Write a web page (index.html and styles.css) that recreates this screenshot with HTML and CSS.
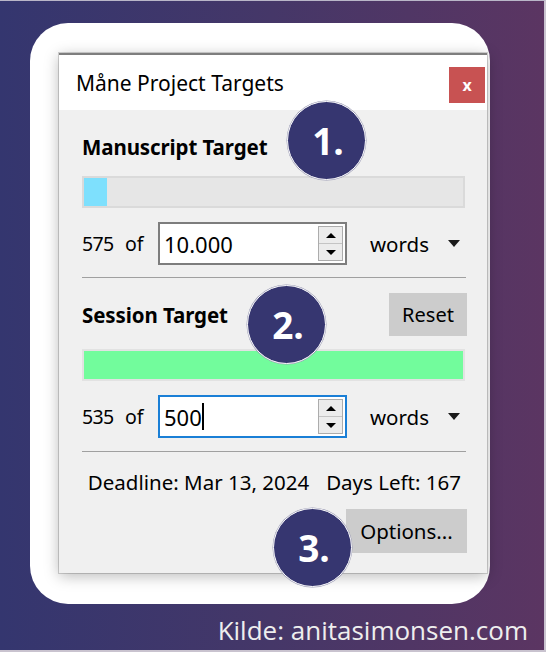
FILE: index.html
```html
<!DOCTYPE html>
<html lang="en">
<head>
<meta charset="utf-8">
<title>Måne Project Targets</title>
<link rel="stylesheet" href="styles.css">
</head>
<body>
<div class="frame">
  <div class="card">
    <div class="dialog">
      <div class="titlebar">
        <span class="title">Måne Project Targets</span>
        <span class="close">x</span>
      </div>
      <div class="body">
        <div class="heading">Manuscript Target</div>
        <div class="bar"><div class="fill blue" style="width:6%"></div></div>
        <div class="row">
          <span class="count">575</span><span class="of">of</span>
          <div class="input"><span class="value">10.000</span>
            <div class="spin"><span class="up"></span><span class="down"></span></div>
          </div>
          <span class="unit">words</span><span class="caret"></span>
        </div>
        <div class="sep"></div>
        <div class="heading-row">
          <div class="heading">Session Target</div>
          <span class="btn reset">Reset</span>
        </div>
        <div class="bar bar2"><div class="fill green" style="width:100%"></div></div>
        <div class="row">
          <span class="count">535</span><span class="of">of</span>
          <div class="input focus"><span class="value">500</span><span class="cursor"></span>
            <div class="spin"><span class="up"></span><span class="down"></span></div>
          </div>
          <span class="unit">words</span><span class="caret"></span>
        </div>
        <div class="sep sep2"></div>
        <div class="deadline"><span>Deadline: Mar 13, 2024</span><span>Days Left: 167</span></div>
        <div class="actions"><span class="btn options">Options...</span></div>
      </div>
    </div>
    <span class="badge b1">1.</span>
    <span class="badge b2">2.</span>
    <span class="badge b3">3.</span>
  </div>
  <div class="caption">Kilde: anitasimonsen.com</div>
</div>
</body>
</html>
```
FILE: styles.css
```css
* { box-sizing: border-box; }
html, body { margin: 0; padding: 0; }
body { width: 546px; height: 652px; overflow: hidden; }

.frame {
  width: 546px;
  height: 652px;
  background: linear-gradient(to right, #34366f 0%, #453768 50%, #5b3562 100%);
  padding: 23px 0 0 30px;
  border-top: 1px solid #b9b6c8;
  border-right: 2px solid #c9c3cf;
  border-bottom: 2px solid #c9c3cf;
  display: flex;
  flex-direction: column;
}

.card {
  position: relative;
  width: 460px;
  height: 581px;
  margin-top: -1px;
  background: #fff;
  border-radius: 38px;
  padding: 30px 0 0 29px;
}

.dialog {
  width: 428px;
  background: #f0f0f0;
  border-top: 2px solid #7e7e7e;
  box-shadow: 0 3px 14px rgba(0, 0, 0, 0.28), 0 0 0 1px #d6d6d6;
  font-family: "Noto Sans", "Open Sans", sans-serif;
  color: #000;
}

.titlebar {
  height: 55px;
  background: #fff;
  display: flex;
  align-items: center;
  justify-content: space-between;
  padding: 0 2px 0 17px;
}
.title { font-size: 21px; }
.close {
  width: 36px;
  height: 36px;
  background: #c85252;
  color: #fff;
  font-weight: bold;
  font-size: 16px;
  display: flex;
  align-items: center;
  justify-content: center;
  margin-top: 4px;
}

.body { padding: 24px 21px 20px 23px; }

.heading {
  font-weight: bold;
  font-size: 20.5px;
  line-height: 26px;
  height: 26px;
  letter-spacing: -0.1px;
}

.bar {
  margin-top: 16px;
  height: 32px;
  width: 383px;
  background: #e6e6e6;
  border: 2px solid #dadada;
}
.bar2 { margin-top: 13px; border-color: #e2e2e2; }
.fill { height: 100%; }
.fill.blue { background: #7ee0fd; }
.fill.green { background: #72fc9c; }

.row {
  margin-top: 14px;
  height: 43px;
  display: flex;
  align-items: center;
  font-size: 19.5px;
}
.count { width: 43px; letter-spacing: -0.6px; }
.of { width: 33px; }
.input {
  position: relative;
  width: 189px;
  height: 43px;
  background: #fff;
  border: 2px solid #7d7d7d;
  display: flex;
  align-items: center;
  padding-left: 4px;
  font-size: 22px;
}
.input.focus { border-color: #1a7fd6; }
.cursor {
  width: 2px;
  height: 27px;
  background: #000;
}
.spin {
  position: absolute;
  right: 2px;
  top: 2px;
  width: 25px;
  height: 35px;
  border: 1px solid #acacac;
  background: #ececec;
  display: flex;
  flex-direction: column;
}
.spin span {
  flex: 1;
  display: flex;
  align-items: center;
  justify-content: center;
  background: #ececec;
}
.spin .up { border-bottom: 1px solid #c4c4c4; }
.spin .up::after {
  content: "";
  border-left: 5px solid transparent;
  border-right: 5px solid transparent;
  border-bottom: 5px solid #000;
}
.spin .down::after {
  content: "";
  border-left: 5px solid transparent;
  border-right: 5px solid transparent;
  border-top: 5px solid #000;
}
.unit { margin-left: 23px; font-size: 20.5px; }
.caret {
  margin-left: auto;
  margin-right: 6px;
  border-left: 6px solid transparent;
  border-right: 6px solid transparent;
  border-top: 7px solid #1a1a1a;
}

.sep {
  margin-top: 12px;
  height: 1px;
  width: 384px;
  background: #a0a0a0;
}
.sep2 { margin-top: 13px; }

.heading-row {
  margin-top: 15px;
  height: 43px;
  display: flex;
  align-items: center;
  justify-content: space-between;
}

.btn {
  background: #cccccc;
  display: flex;
  align-items: center;
  justify-content: center;
  font-size: 20px;
}
.reset { width: 78px; height: 43px; margin-right: -1px; }

.deadline {
  margin-top: 17px;
  height: 26px;
  line-height: 26px;
  font-size: 20.5px;
  display: flex;
  justify-content: flex-end;
  gap: 17px;
  padding-right: 5px;
}

.actions {
  margin-top: 14px;
  display: flex;
  justify-content: flex-end;
}
.options { width: 121px; height: 44px; margin-right: -1px; font-size: 20.5px; }

.badge {
  position: absolute;
  width: 79px;
  height: 79px;
  border-radius: 50%;
  background: #363670;
  border: 1.5px solid #fff;
  box-shadow: 0 0 0 0.5px #9b9bb5;
  color: #fff;
  font-family: "Open Sans", sans-serif;
  font-weight: bold;
  font-size: 37px;
  display: flex;
  align-items: center;
  justify-content: center;
  padding-left: 3px;
}
.b1 { left: 257px; top: 78px; }
.b2 { left: 217px; top: 262px; }
.b3 { left: 243px; top: 485px; }

.caption {
  margin-top: 10px;
  width: 498px;
  text-align: right;
  font-family: "Open Sans", sans-serif;
  font-size: 26px;
  line-height: 32px;
  color: #eeeeee;
  font-weight: 400;
}
```
